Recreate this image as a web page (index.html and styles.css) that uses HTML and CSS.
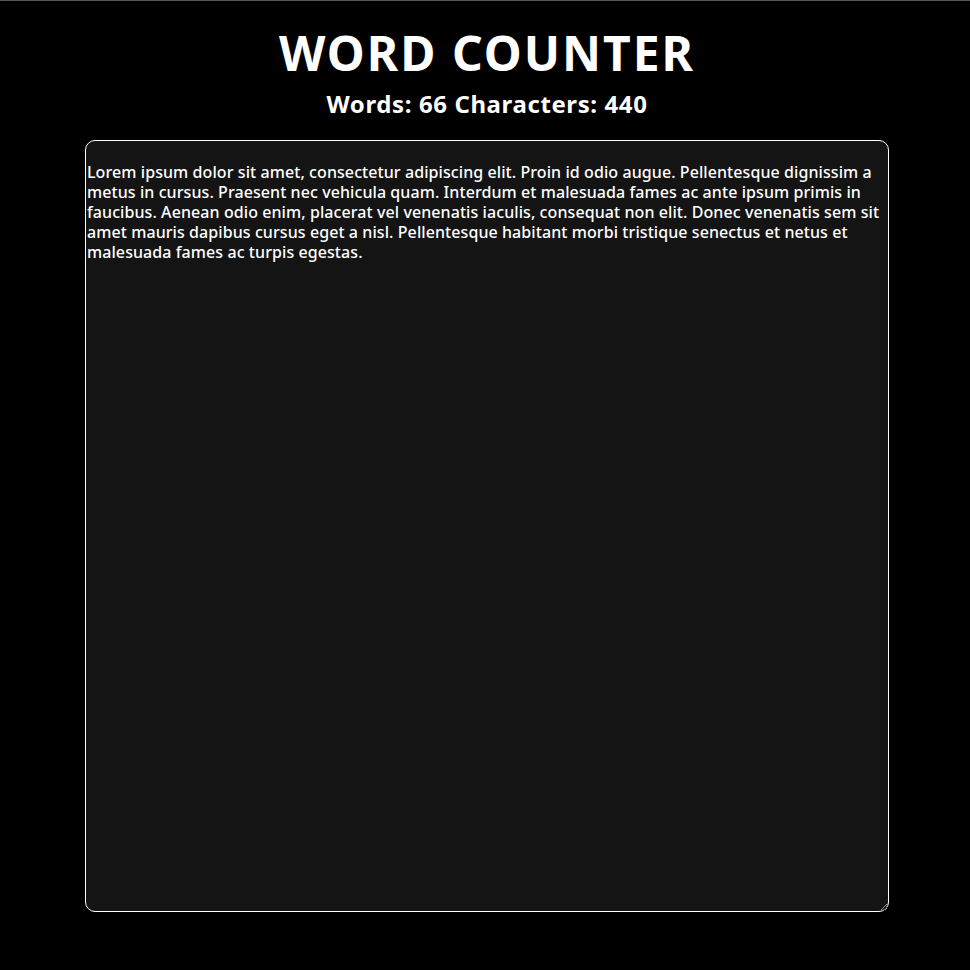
FILE: index.html
```html
<!DOCTYPE html>
<html lang="en">
<head>
<meta charset="utf-8">
<title>Word Counter</title>
<link rel="stylesheet" href="styles.css">
</head>
<body>
<main class="app">
  <h1 class="title">WORD COUNTER</h1>
  <h2 class="stats">Words: 66 Characters: 440</h2>
  <textarea class="editor" spellcheck="false">Lorem ipsum dolor sit amet, consectetur adipiscing elit. Proin id odio augue. Pellentesque dignissim a metus in cursus. Praesent nec vehicula quam. Interdum et malesuada fames ac ante ipsum primis in faucibus. Aenean odio enim, placerat vel venenatis iaculis, consequat non elit. Donec venenatis sem sit amet mauris dapibus cursus eget a nisl. Pellentesque habitant morbi tristique senectus et netus et malesuada fames ac turpis egestas.</textarea>
</main>
</body>
</html>
```
FILE: styles.css
```css
html, body {
  margin: 0;
  padding: 0;
  background: #000;
}
body {
  border-top: 1px solid #555;
  height: 969px;
  font-family: "Noto Sans", "DejaVu Sans", sans-serif;
  color: #fff;
}
.app {
  display: flex;
  flex-direction: column;
  align-items: center;
  padding-left: 4px;
}
.title {
  margin: 22px 0 0;
  font-size: 48px;
  line-height: 60px;
  font-weight: 700;
  letter-spacing: 2px;
}
.stats {
  margin: 6px 0 0;
  font-size: 24px;
  line-height: 30px;
  font-weight: 700;
  letter-spacing: 0.6px;
}
.editor {
  box-sizing: border-box;
  margin-top: 21px;
  width: 804px;
  height: 772px;
  padding: 21px 1px 0;
  background: #141414;
  color: #fff;
  border: 1px solid #fff;
  border-radius: 10px;
  font-family: "Noto Sans", "DejaVu Sans", sans-serif;
  font-size: 16px;
  line-height: 20px;
  font-weight: 500;
  letter-spacing: 0.08px;
  outline: none;
}
```
